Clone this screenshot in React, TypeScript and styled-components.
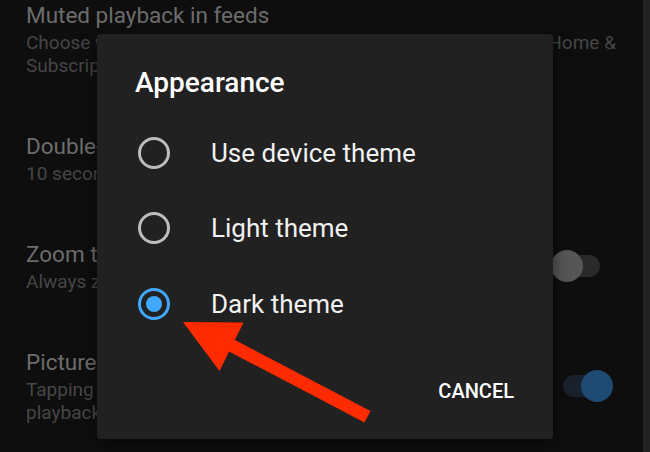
import * as React from "react";
import styled, { createGlobalStyle } from "styled-components";

const GlobalStyle = createGlobalStyle`
  body {
    margin: 0;
    background: #0e0e0e;
    font-family: Roboto, "Noto Sans", sans-serif;
  }
`;

const Screen = styled.div`
  position: relative;
  width: 650px;
  height: 452px;
  overflow: hidden;
  box-sizing: border-box;
  background: #0e0e0e;
  border-right: 7px solid #232323;
`;

const SettingsList = styled.div`
  display: flex;
  flex-direction: column;
  gap: 54px;
  padding: 0 24px 0 26px;
`;

const SettingRow = styled.div`
  display: flex;
  align-items: center;
  gap: 40px;
`;

const SettingText = styled.div`
  flex: 1;
  min-width: 0;
`;

const SettingTitle = styled.div`
  font-size: 22.5px;
  line-height: 30px;
  color: #6c6c6c;
`;

const SettingSubtitle = styled.div`
  margin-top: 1px;
  font-size: 19px;
  line-height: 23px;
  color: #464646;
`;

const Switch = styled.div`
  position: relative;
  flex: none;
  width: 62px;
  height: 32px;
  margin-right: 6px;
`;

const SwitchTrack = styled.div<{ on: boolean }>`
  position: absolute;
  left: 12px;
  top: 5px;
  width: 37px;
  height: 22px;
  border-radius: 11px;
  background: ${(props) => (props.on ? "#18212c" : "#2a2a2a")};
`;

const SwitchThumb = styled.div<{ on: boolean }>`
  position: absolute;
  top: 0;
  left: ${(props) => (props.on ? "30px" : "0")};
  width: 32px;
  height: 32px;
  border-radius: 50%;
  background: ${(props) => (props.on ? "#1e4a74" : "#565656")};
`;

const Dialog = styled.div`
  position: absolute;
  left: 97px;
  top: 34px;
  width: 456px;
  height: 405px;
  box-sizing: border-box;
  display: flex;
  flex-direction: column;
  padding: 33px 39px 36px 38px;
  background: #212121;
  border-radius: 3px;
  box-shadow: 0 4px 16px rgba(0, 0, 0, 0.5);
`;

const DialogTitle = styled.h2`
  margin: 0 0 16px;
  font-size: 28px;
  line-height: 32px;
  font-weight: 500;
  color: #ffffff;
`;

const OptionRow = styled.label`
  display: flex;
  align-items: center;
  gap: 41px;
  height: 75.5px;
  padding-left: 3px;
`;

const Radio = styled.span<{ checked: boolean }>`
  display: flex;
  align-items: center;
  justify-content: center;
  flex: none;
  width: 32px;
  height: 32px;
  box-sizing: border-box;
  border-radius: 50%;
  border: 3.5px solid ${(props) => (props.checked ? "#41a8ff" : "#bdbdbd")};
`;

const RadioDot = styled.span`
  width: 16px;
  height: 16px;
  border-radius: 50%;
  background: #41a8ff;
`;

const OptionLabel = styled.span`
  font-size: 26px;
  line-height: 30px;
  color: #f1f1f1;
`;

const Actions = styled.div`
  margin-top: auto;
  display: flex;
  justify-content: flex-end;
`;

const TextButton = styled.button`
  padding: 0;
  border: none;
  background: none;
  font-family: Roboto, "Noto Sans", sans-serif;
  font-size: 20px;
  line-height: 24px;
  font-weight: 500;
  color: #ffffff;
  text-transform: uppercase;
`;

const ArrowLayer = styled.svg`
  position: absolute;
  left: 0;
  top: 0;
  pointer-events: none;
`;

const settings = [
  {
    title: "Muted playback in feeds",
    subtitle:
      "Choose whether videos play automatically while browsing the Home & Subscriptions tabs",
  },
  { title: "Double-tap to seek", subtitle: "10 seconds" },
  {
    title: "Zoom to fill screen",
    subtitle: "Always zoom to fill the screen",
    toggle: false,
  },
  {
    title: "Picture-in-picture",
    subtitle:
      "Tapping home while watching a video will start PiP playback in a small window",
    toggle: true,
  },
];

const themes = ["Use device theme", "Light theme", "Dark theme"];

export default function App(): React.ReactElement {
  const selected = 2;
  return (
    <>
      <GlobalStyle />
      <Screen>
        <SettingsList>
          {settings.map((s) => (
            <SettingRow key={s.title}>
              <SettingText>
                <SettingTitle>{s.title}</SettingTitle>
                <SettingSubtitle>{s.subtitle}</SettingSubtitle>
              </SettingText>
              {s.toggle !== undefined && (
                <Switch>
                  <SwitchTrack on={s.toggle} />
                  <SwitchThumb on={s.toggle} />
                </Switch>
              )}
            </SettingRow>
          ))}
        </SettingsList>

        <Dialog>
          <DialogTitle>Appearance</DialogTitle>
          {themes.map((t, i) => (
            <OptionRow key={t}>
              <Radio checked={i === selected}>
                {i === selected && <RadioDot />}
              </Radio>
              <OptionLabel>{t}</OptionLabel>
            </OptionRow>
          ))}
          <Actions>
            <TextButton>Cancel</TextButton>
          </Actions>
        </Dialog>

        <ArrowLayer width="650" height="452" viewBox="0 0 650 452">
          <polygon points="183,322 243.5,322.5 219.5,371" fill="#fe2a00" />
          <line
            x1="222"
            y1="340.5"
            x2="367.5"
            y2="416.7"
            stroke="#fe2a00"
            strokeWidth="13"
          />
        </ArrowLayer>
      </Screen>
    </>
  );
}
